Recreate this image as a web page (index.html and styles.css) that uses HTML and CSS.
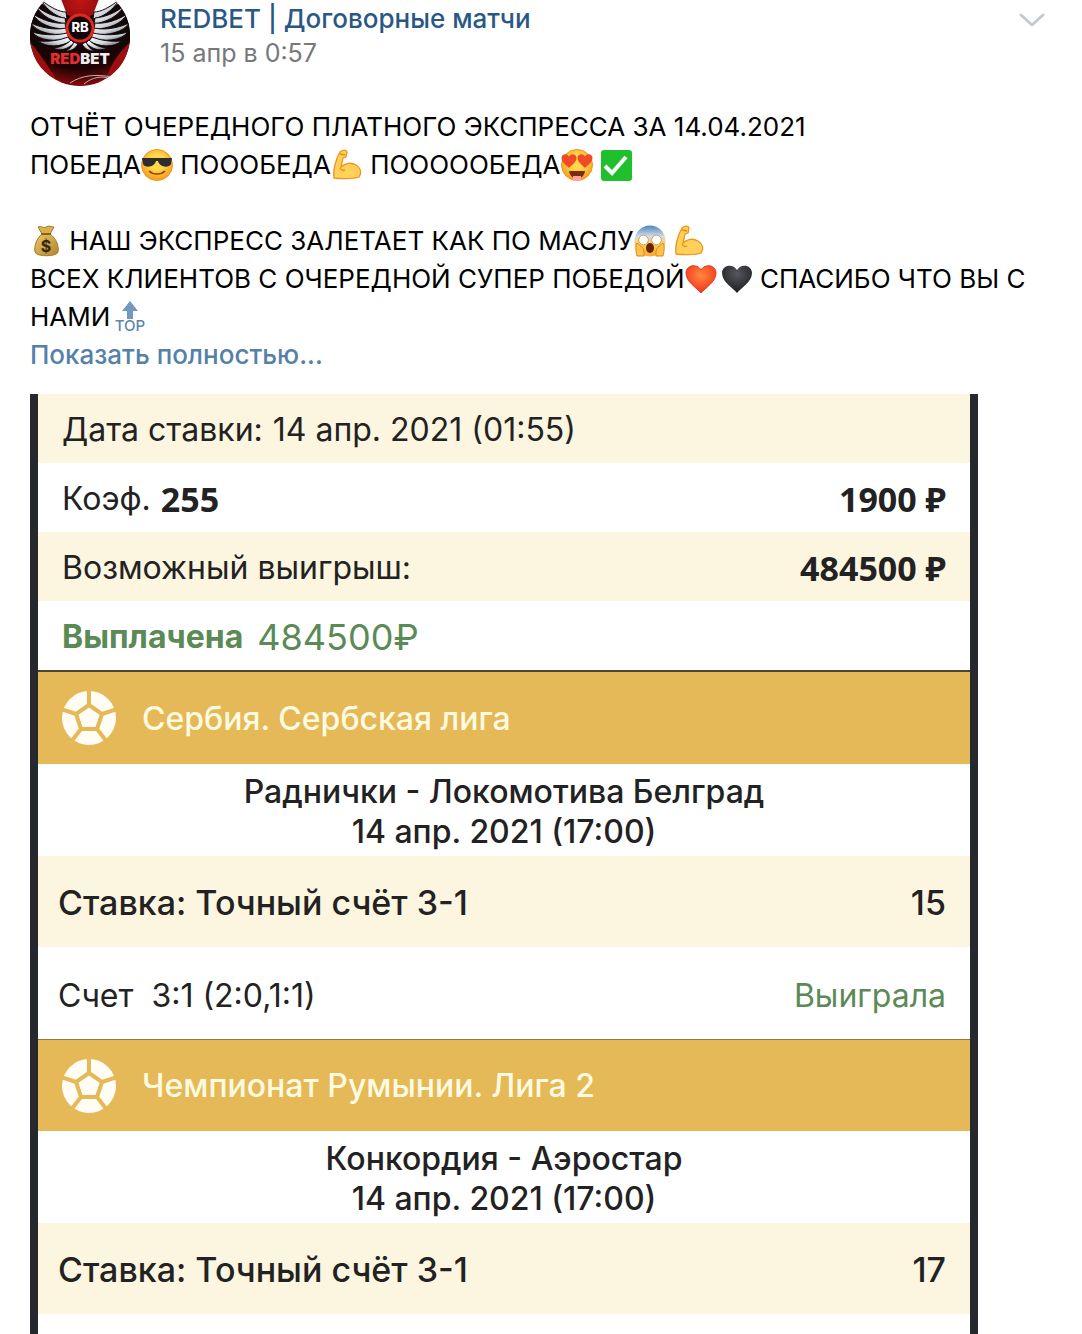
FILE: index.html
```html
<!DOCTYPE html>
<html lang="ru">
<head>
<meta charset="utf-8">
<meta name="viewport" content="width=device-width, initial-scale=1">
<title>REDBET | Договорные матчи</title>
<link rel="stylesheet" href="styles.css">
</head>
<body>
<svg class="sprite" aria-hidden="true">
  <defs>
    <radialGradient id="face" cx=".5" cy=".4" r=".6"><stop offset=".4" stop-color="#ffd84a"/><stop offset="1" stop-color="#f79a1c"/></radialGradient>
    <linearGradient id="scared" x1="0" y1="0" x2="0" y2="1"><stop offset="0" stop-color="#4d86bd"/><stop offset=".35" stop-color="#d3dce8"/><stop offset=".6" stop-color="#ffd04a"/><stop offset="1" stop-color="#fba92a"/></linearGradient>
    <radialGradient id="red" cx=".5" cy=".35" r=".65"><stop offset="0" stop-color="#ff8a3d"/><stop offset="1" stop-color="#f5301e"/></radialGradient>
    <radialGradient id="coal" cx=".5" cy=".3" r=".7"><stop offset="0" stop-color="#55585c"/><stop offset="1" stop-color="#1b1c1e"/></radialGradient>
    <linearGradient id="gold" x1="0" y1="0" x2="1" y2="1"><stop offset="0" stop-color="#e9c868"/><stop offset="1" stop-color="#b5852b"/></linearGradient>
    <radialGradient id="crimson" cx=".5" cy=".15" r=".9"><stop offset="0" stop-color="#c01414"/><stop offset=".3" stop-color="#8a0c0c"/><stop offset=".5" stop-color="#160304"/><stop offset=".75" stop-color="#1d0304"/><stop offset="1" stop-color="#a80d0d"/></radialGradient>
    <linearGradient id="feather" x1="1" y1="0" x2="0" y2="1"><stop offset="0" stop-color="#fff"/><stop offset=".55" stop-color="#cfd4da"/><stop offset="1" stop-color="#4a4f57"/></linearGradient>
    <clipPath id="disc"><circle cx="50" cy="50" r="50"/></clipPath>
    <path id="heart-shape" d="M16 30C12 25 1 19 1 10C1 2 12 0 16 7C20 0 31 2 31 10C31 19 20 25 16 30Z"/>
    <symbol id="arm" viewBox="0 0 32 32"><path d="M9 3C11 1 15 0 16 3L15 8L12 9L10 18C14 14 20 13 25 16C30 19 31 24 28 28C22 30 10 30 3 29C2 23 4 11 9 3Z" fill="#ffd15a" stroke="#f0931f" stroke-width="1.3"/><path d="M9 19C10 21 12 22 14 21M9 5L14 6" fill="none" stroke="#e88d1d" stroke-width="1.3"/></symbol>
    <symbol id="ball" viewBox="0 0 54 54">
      <circle cx="27" cy="27" r="27" fill="#fffdf4"/>
      <path d="M27 14L40 23L35 38H19L14 23ZM27 14V-1M40 23L55 18M35 38L45 51M19 38L9 51M14 23L-1 18" fill="none" stroke="#e5b858" stroke-width="4"/>
    </symbol>
    <g id="wing" fill="url(#feather)" stroke="#14090a" stroke-width="1">
      <path d="M37 33C28 31 18 26 11 14C20 21 29 26 36 26Z"/>
      <path d="M36 38C24 36 12 31 6 20C16 28 26 31 35 32Z"/>
      <path d="M36 43C22 43 8 38 3 28C14 35 25 38 35 37Z"/>
      <path d="M37 48C22 50 6 46 1 37C14 43 26 44 36 42Z"/>
      <path d="M39 52C26 56 9 55 2 46C16 50 28 49 37 47Z"/>
      <path d="M41 55C31 61 17 62 8 55C21 56 30 54 38 51Z"/>
      <path d="M44 57C38 63 30 66 23 62C32 61 37 58 41 54Z"/>
      <path d="M48 58C45 63 40 66 35 65C40 63 42 60 44 56Z"/>
    </g>
  </defs>
</svg>

<main class="post">
  <header class="author">
    <svg class="avatar" viewBox="0 14 100 86" role="img" aria-label="REDBET">
      <g clip-path="url(#disc)">
        <rect width="100" height="100" fill="url(#crimson)"/>
        <path d="M0 0H26L36 26L28 28L8 18ZM100 0H74L64 26L72 28L92 18Z" fill="#fff"/>
        <path d="M8 16L40 30V60H0V30ZM92 16L60 30V60H100V30Z" fill="#120607"/>
        <path d="M0 56C12 70 22 86 30 100H0ZM100 56C88 68 80 78 74 100H100Z" fill="#9c0e10"/>
        <use href="#wing"/>
        <use href="#wing" transform="matrix(-1 0 0 1 100 0)"/>
        <circle cx="50" cy="42" r="13" fill="#120405" stroke="#e02a1c" stroke-width="3"/>
        <path d="M40 97C52 89 66 88 82 91M54 98C62 91 72 90 78 92" fill="none" stroke="#b9b4b4"/>
      </g>
      <text class="logo-mark" x="50" y="46" text-anchor="middle">RB</text>
      <text class="logo-word" x="50" y="78" text-anchor="middle"><tspan class="logo-red">RED</tspan>BET</text>
    </svg>
    <div class="author-info">
      <a class="author-name" href="#">REDBET | Договорные матчи</a>
      <time class="author-date" datetime="2021-04-15T00:57">15 апр в 0:57</time>
    </div>
    <button class="menu" type="button" aria-label="Меню">
      <svg viewBox="0 0 26 14" width="26" height="14"><path d="M2 2L13 12L24 2" fill="none" stroke="#c5cad0" stroke-width="3" stroke-linecap="round" stroke-linejoin="round"/></svg>
    </button>
  </header>

  <section class="text">
    <p>ОТЧЁТ ОЧЕРЕДНОГО ПЛАТНОГО ЭКСПРЕССА ЗА 14.04.2021<br>
    ПОБЕДА<svg class="emoji" viewBox="0 0 32 32"><circle cx="16" cy="16" r="15.5" fill="url(#face)" stroke="#f0962a"/><path d="M1 9H31L30 15C28 19 19 19 17 12H15C13 19 4 19 2 15Z" fill="#2d2d30"/><path d="M8 22C12 26 20 26 24 22" fill="none" stroke="#8c3f12" stroke-width="1.6"/></svg> ПОООБЕДА<svg class="emoji"><use href="#arm"/></svg> ПОООООБЕДА<svg class="emoji" viewBox="0 0 32 32"><circle cx="16" cy="16" r="15.5" fill="url(#face)" stroke="#f0962a"/><path d="M8 22H24C23 32 9 32 8 22Z" fill="#7d2b10"/><path d="M12 27H20V32H12Z" fill="#ffa39a"/><use href="#heart-shape" transform="translate(0 4) scale(.5)" fill="#f04a26"/><use href="#heart-shape" transform="translate(16 4) scale(.5)" fill="#f04a26"/></svg> <svg class="emoji" viewBox="0 0 32 32"><rect x="1" y="1" width="31" height="31" rx="3" fill="#1fc02b"/><path d="M5 17L12 24L26 8" fill="none" stroke="#fff" stroke-width="4"/></svg></p>
    <p><svg class="emoji" viewBox="0 0 32 32"><path d="M8 2C12 0 13 4 16 2C19 0 21 2 24 2L20 9H12Z" fill="#d9b04b" stroke="#a5792a"/><path d="M12 9H20C27 14 29 22 28 27C27 32 6 32 5 27C4 22 6 14 12 9Z" fill="url(#gold)" stroke="#a5792a"/><path d="M11 9H21" stroke="#8a5f1c" stroke-width="2"/><text class="dollar" x="16" y="27" text-anchor="middle">$</text></svg> НАШ ЭКСПРЕСС ЗАЛЕТАЕТ КАК ПО МАСЛУ<svg class="emoji" viewBox="0 0 32 32"><circle cx="16" cy="16" r="15.5" fill="url(#scared)"/><circle cx="9.5" cy="15" r="4.8" fill="#fff" stroke="#c9a271"/><circle cx="22.5" cy="15" r="4.8" fill="#fff" stroke="#c9a271"/><ellipse cx="16" cy="23" rx="4" ry="5" fill="#6b220d"/><path d="M3 31C2 27 1 21 3 18C6 21 11 22 10 31ZM29 31C30 27 31 21 29 18C26 21 21 22 22 31Z" fill="#ffc445" stroke="#e07f25"/></svg> <svg class="emoji"><use href="#arm"/></svg><br>
    ВСЕХ КЛИЕНТОВ С ОЧЕРЕДНОЙ СУПЕР ПОБЕДОЙ<svg class="emoji" viewBox="0 0 32 32"><use href="#heart-shape" fill="url(#red)" stroke="#e0391c"/></svg><svg class="emoji emoji-next" viewBox="0 0 32 32"><use href="#heart-shape" fill="url(#coal)"/></svg> СПАСИБО ЧТО ВЫ С НАМИ<svg class="emoji emoji-next" viewBox="0 0 32 32"><path d="M16 0L24 10H19V18H13V10H8Z" fill="#7499bd"/><text class="top" x="16" y="30" text-anchor="middle">TOP</text></svg></p>
    <a class="more" href="#">Показать полностью...</a>
  </section>

  <section class="slip">
    <dl class="summary">
      <div class="row tinted"><dt>Дата ставки:</dt><dd>14 апр. 2021 (01:55)</dd></div>
      <div class="row"><dt>Коэф.</dt><dd class="strong">255</dd><dd class="strong end">1900 ₽</dd></div>
      <div class="row tinted"><dt>Возможный выигрыш:</dt><dd class="strong end">484500 ₽</dd></div>
      <div class="row paid"><dt>Выплачена</dt><dd>484500₽</dd></div>
    </dl>
    <article class="event">
      <h2 class="league"><svg class="ball"><use href="#ball"/></svg>Сербия. Сербская лига</h2>
      <p class="match">Раднички - Локомотива Белград<br>14 апр. 2021 (17:00)</p>
      <div class="row bet tinted"><span>Ставка: Точный счёт 3-1</span><span class="end">15</span></div>
      <div class="row score"><span>Счет&nbsp; 3:1 (2:0,1:1)</span><span class="end won">Выиграла</span></div>
    </article>
    <article class="event">
      <h2 class="league"><svg class="ball"><use href="#ball"/></svg>Чемпионат Румынии. Лига 2</h2>
      <p class="match">Конкордия - Аэростар<br>14 апр. 2021 (17:00)</p>
      <div class="row bet tinted"><span>Ставка: Точный счёт 3-1</span><span class="end">17</span></div>
    </article>
  </section>
</main>
</body>
</html>
```
FILE: styles.css
```css
* { box-sizing: border-box; }

body {
  margin: 0;
  background: #fff;
  color: #000;
  font-family: Inter, "Noto Sans", sans-serif;
}

a { text-decoration: none; }
p, dl, dd, h2 { margin: 0; }

.sprite { position: absolute; width: 0; height: 0; }

.post {
  display: flex;
  flex-direction: column;
  gap: 20px;
  min-height: 100vh;
  padding: 0 32px 0 30px;
}

.author { display: flex; gap: 30px; }
.avatar { flex: none; width: 100px; height: 86px; }
.logo-mark { fill: #fff; font: 800 13px Inter, sans-serif; }
.logo-word { fill: #eee; font: 900 15px Inter, sans-serif; }
.logo-red { fill: #e0302c; }

.author-info { flex: 1; display: flex; flex-direction: column; padding-top: 2px; }
.author-name { color: #2a5885; font-size: 26px; font-weight: 500; line-height: 34px; }
.author-date { color: #76787a; font-size: 25px; line-height: 34px; }

.menu {
  align-self: flex-start;
  padding: 13px 5px;
  border: 0;
  background: none;
  line-height: 0;
}

.text { font-size: 26px; line-height: 38px; padding-top: 2px; }
.text p + p { margin-top: 38px; }
.more { display: block; color: #5580a8; font-weight: 500; }

.emoji { width: 32px; height: 32px; vertical-align: -7px; overflow: visible; }
.emoji-next { margin-left: 4px; }
.dollar { fill: #33270d; font: 700 16px Inter, sans-serif; }
.top { fill: #5d85ad; font: 500 15px Inter, sans-serif; }

.slip {
  flex: 1;
  max-width: 948px;
  border: solid #25282d;
  border-width: 0 8px;
  color: #222;
  font-size: 32px;
}

.row {
  display: flex;
  align-items: center;
  gap: 10px;
  min-height: 69px;
  padding: 2px 24px 0;
}
.end { margin-left: auto; }
.tinted { background: #fcf5df; }

.summary { border-bottom: 2px solid #4d452f; }
.strong { font-family: "Noto Sans", sans-serif; font-size: 34px; font-weight: 700; line-height: 40px; }
.paid { gap: 14px; color: #5b8a56; }
.paid dt { font-weight: 700; }
.paid dd { font-size: 36px; }

.league {
  display: flex;
  align-items: center;
  gap: 26px;
  min-height: 92px;
  padding: 0 24px;
  background: #e5b858;
  color: #fffbe0;
  font-size: 32px;
  font-weight: 450;
}
.event + .event .league { border-top: 1px solid #8f7a4a; }
.ball { flex: none; width: 54px; height: 54px; }

.match { padding: 8px 24px 4px; font-weight: 450; line-height: 40px; text-align: center; }
.bet { min-height: 91px; padding-left: 20px; font-size: 34px; font-weight: 450; }
.score { min-height: 92px; padding-top: 4px; padding-left: 20px; }
.won { color: #5b8a56; }
```
